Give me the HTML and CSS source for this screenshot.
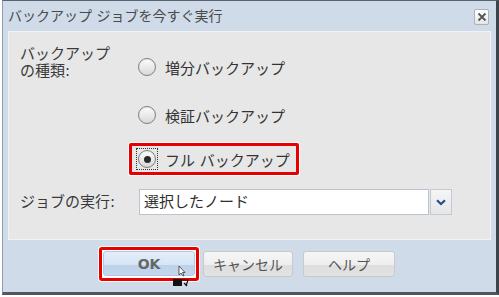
FILE: index.html
```html
<!DOCTYPE html>
<html>
<head>
  <title>バックアップ ジョブを今すぐ実行</title>
  <link rel="stylesheet" href="styles.css">
</head>
<body>
  <div class="window">
    <div class="titlebar">
      <span class="title">バックアップ ジョブを今すぐ実行</span>
      <button class="close-btn" type="button">
        <svg width="10" height="10" viewBox="0 0 10 10"><path d="M1.5 1.5 L8.5 8.5 M8.5 1.5 L1.5 8.5" stroke="#555" stroke-width="1.8" fill="none"/></svg>
      </button>
    </div>

    <div class="panel">
      <div class="row type-row">
        <div class="field-label">バックアップ<br>の種類:</div>
        <div class="options">
          <label class="option opt-first">
            <span class="radio"></span>
            <span>増分バックアップ</span>
          </label>
          <label class="option opt-second">
            <span class="radio"></span>
            <span>検証バックアップ</span>
          </label>
          <div class="highlight">
            <label class="option">
              <span class="focus"><span class="radio checked"></span></span>
              <span>フル バックアップ</span>
            </label>
          </div>
        </div>
      </div>

      <div class="row job-row">
        <div class="field-label">ジョブの実行:</div>
        <div class="select">
          <div class="select-value">選択したノード</div>
          <div class="select-btn">
            <svg width="10" height="7" viewBox="0 0 10 7"><path d="M1 1.2 L5 5 L9 1.2" stroke="#234f8c" stroke-width="2.2" fill="none"/></svg>
          </div>
        </div>
      </div>
    </div>

    <div class="footer">
      <div class="ok-mark">
        <button class="btn btn-ok" type="button">OK</button>
      </div>
      <button class="btn" type="button">キャンセル</button>
      <button class="btn btn-help" type="button">ヘルプ</button>
      <svg class="cursor" width="20" height="24" viewBox="0 0 20 24">
        <path d="M8 1 L8 10 L10 8 L12 11 L13 10.5 L11.5 7.5 L14 7.5 Z" fill="#fff" stroke="#333" stroke-width="0.8"/>
        <rect x="2" y="14" width="9" height="7" fill="#111"/>
        <path d="M11 15 L17 15 L15 21 M13 18 L16 21" stroke="#111" stroke-width="1.2" fill="none"/>
      </svg>
    </div>
  </div>
</body>
</html>
```

FILE: styles.css
```css
body {
  margin: 0;
  background: #fff;
  font-family: "DejaVu Sans", "Noto Sans CJK JP", sans-serif;
  color: #333;
}

.window {
  box-sizing: border-box;
  width: 497px;
  height: 295px;
  margin-left: 2px;
  background: #cfdbe8;
  border-top: 1px solid #59636e;
  border-right: 3px solid #3d434a;
  border-bottom: 3px solid #50565d;
  border-left: 1px solid #8f9caa;
  display: flex;
  flex-direction: column;
  position: relative;
}

.titlebar {
  height: 30px;
  display: flex;
  align-items: center;
  justify-content: space-between;
  padding: 0 7px 0 5px;
}

.title {
  font-size: 14px;
  color: #4a4a4a;
  margin-top: -2px;
}

.close-btn {
  box-sizing: border-box;
  width: 15px;
  height: 16px;
  padding: 0;
  margin-top: 1px;
  border: 1px solid #aab3bc;
  border-radius: 2px;
  background: linear-gradient(#ffffff, #e6e6e6);
  display: flex;
  align-items: center;
  justify-content: center;
}

.panel {
  box-sizing: border-box;
  height: 209px;
  margin: 0 5px;
  background: #e7e7e7;
  border: 1px solid #f2f2f2;
  padding: 14px 0 0 11px;
  font-size: 15px;
}

.row {
  display: flex;
}

.field-label {
  width: 118px;
  line-height: 17px;
  color: #3a3a3a;
}

.options {
  display: flex;
  flex-direction: column;
  align-items: flex-start;
}

.option {
  display: flex;
  align-items: center;
  gap: 9px;
  height: 24px;
  color: #333;
}

.opt-first {
  margin-top: 9px;
}

.opt-second {
  margin-top: 24px;
}

.radio {
  box-sizing: border-box;
  width: 18px;
  height: 18px;
  border-radius: 50%;
  border: 1px solid #7f7f7f;
  background: linear-gradient(#fdfdfd, #d8d8d8);
  box-shadow: inset 0 1px 1px rgba(0, 0, 0, 0.08);
  display: flex;
  align-items: center;
  justify-content: center;
}

.radio.checked::after {
  content: "";
  width: 7px;
  height: 7px;
  border-radius: 50%;
  background: #2a2a2a;
}

.focus {
  box-sizing: border-box;
  width: 22px;
  height: 22px;
  margin: 0 -2px;
  border: 1px dotted #333;
  display: flex;
  align-items: center;
  justify-content: center;
}

.highlight {
  margin: 16px 0 0 -9px;
  padding: 1px 6px 1px 6px;
  border: 3px solid #e60000;
  border-radius: 2px;
  box-shadow: 0 0 0 1px #fff;
}

.job-row {
  margin-top: 14px;
  align-items: center;
}

.select {
  display: flex;
  margin-left: 1px;
}

.select-value {
  box-sizing: border-box;
  width: 290px;
  height: 26px;
  border: 1px solid #b9c4cf;
  background: #fff;
  padding: 0 4px;
  line-height: 24px;
  color: #2e2e2e;
}

.select-btn {
  box-sizing: border-box;
  width: 22px;
  height: 26px;
  margin-left: 1px;
  border: 1px solid #c3cad2;
  background: linear-gradient(#f4f5f6, #e4e6e8);
  display: flex;
  align-items: center;
  justify-content: center;
}

.footer {
  flex: 1;
  display: flex;
  justify-content: center;
  align-items: flex-start;
  gap: 9px;
  padding-top: 7px;
  position: relative;
}

.btn {
  box-sizing: border-box;
  width: 90px;
  height: 26px;
  margin-top: 4px;
  padding: 0;
  border: 1px solid #c6cacf;
  border-radius: 3px;
  background: linear-gradient(#f6f6f6 0%, #eeeeee 55%, #dedede 56%, #e2e2e2 100%);
  font-family: "DejaVu Sans", "Noto Sans CJK JP", sans-serif;
  font-size: 14px;
  color: #555;
}

.btn-help {
  width: 92px;
  margin-left: 1px;
}

.ok-mark {
  margin: 0 -5px;
  padding: 1px 1px 2px 1px;
  border: 3px solid #e60000;
  border-radius: 3px;
  background: #fff;
  box-shadow: 0 0 0 1px #fff;
  display: flex;
}

.btn-ok {
  width: 92px;
  height: 25px;
  margin: 0;
  font-weight: bold;
  color: #666;
  background: linear-gradient(#e2eefa 0%, #d6e5f5 55%, #bcd1ea 56%, #c4d7ee 100%);
  border-color: #b7c7d9;
}

.cursor {
  position: absolute;
  left: 168px;
  top: 25px;
}
```
